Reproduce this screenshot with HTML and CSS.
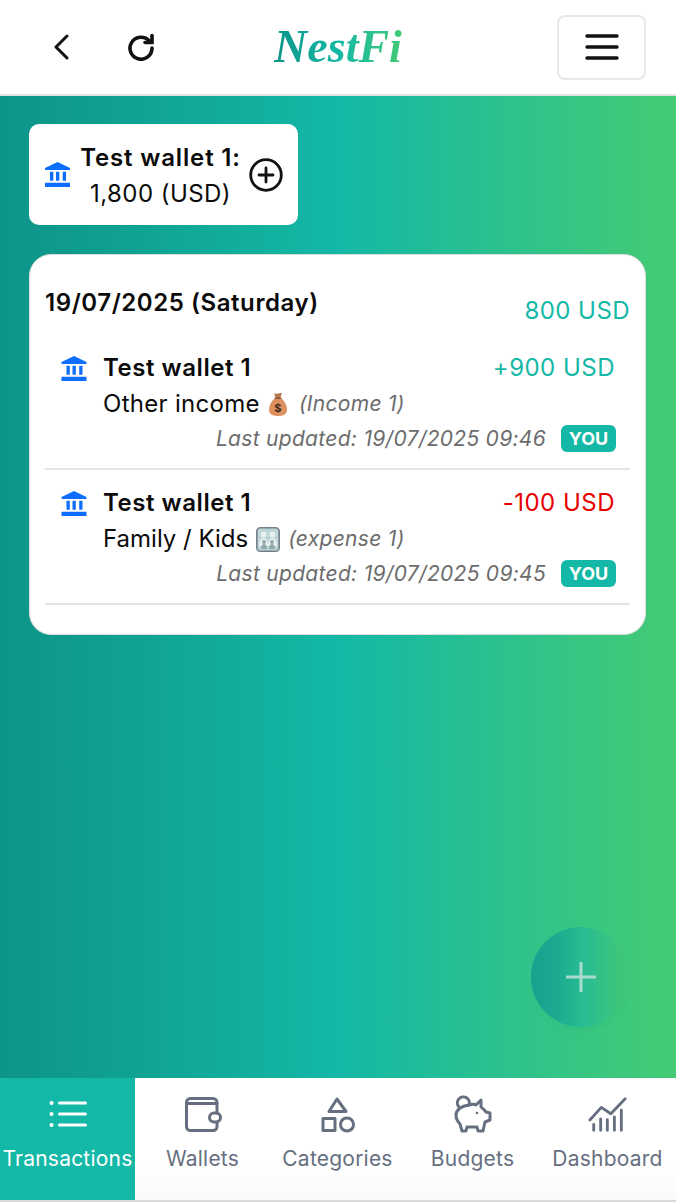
FILE: index.html
```html
<!DOCTYPE html>
<html lang="en">
<head>
<meta charset="utf-8">
<title>NestFi</title>
<link rel="stylesheet" href="styles.css">
</head>
<body>
<div class="app">
  <header class="topbar">
    <div class="top-left">
      <svg class="ic-back" viewBox="0 0 16 26"><path d="M14 2 3 13l11 11"/></svg>
      <svg class="ic-reload" viewBox="0 0 28 28"><path d="M22.3 8A11 11 0 1 0 25 15"/><path d="M25 2.5V9.5H18"/></svg>
    </div>
    <div class="logo">NestFi</div>
    <div class="top-right">
      <button class="menu-btn"><svg viewBox="0 0 34 28"><path d="M2 3h30M2 14h30M2 25h30"/></svg></button>
    </div>
  </header>

  <main class="content">
    <div class="wallet-chip">
      <svg class="bank bank-chip" viewBox="0 0 25 25"><path d="M12.5 0 25 6v2H0V6z"/><path d="M5 9.7h3.300v9H5zM11 9.700h3.300v9H11zM17.700 9.700H21v9h-3.300zM0 20.700h25V25H0z"/></svg>
      <div class="chip-text">
        <div class="chip-name">Test wallet 1:</div>
        <div class="chip-amount">1,800 (USD)</div>
      </div>
      <svg class="ic-plus-circle" viewBox="0 0 34 34"><circle cx="17" cy="17" r="15.300"/><path d="M17 10v14M10 17h14"/></svg>
    </div>

    <section class="card">
      <div class="day-head">
        <div class="day-date">19/07/2025 (Saturday)</div>
        <div class="day-total">800 USD</div>
      </div>

      <article class="tx">
        <svg class="bank bank-row" viewBox="0 0 25 25"><path d="M12.5 0 25 6v2H0V6z"/><path d="M5 9.7h3.300v9H5zM11 9.700h3.300v9H11zM17.700 9.700H21v9h-3.300zM0 20.700h25V25H0z"/></svg>
        <div class="tx-body">
          <div class="tx-line">
            <span class="tx-wallet">Test wallet 1</span>
            <span class="tx-amount income">+900 USD</span>
          </div>
          <div class="tx-cat"><span>Other income</span>
            <svg class="emoji bag" viewBox="0 0 18 23"><path class="bag-tie" d="M5 0c1 1 2 .8 4 .4s3-.2 4-.4l-1.600 5H6.500z"/><path class="bag-body" d="M6 5h6c3 2.500 6 7 6 11.500 0 4.500-3 6.500-9 6.500s-9-2-9-6.500C0 12 3 7.500 6 5z"/><path class="bag-band" d="M5.800 4.600h6.400v1.300H5.800z"/><text class="bag-sign" x="9" y="19">$</text></svg>
            <span class="tx-note">(Income 1)</span></div>
          <div class="tx-meta">
            <span class="tx-time">Last updated: 19/07/2025 09:46</span>
            <span class="badge">YOU</span>
          </div>
        </div>
      </article>

      <article class="tx">
        <svg class="bank bank-row" viewBox="0 0 25 25"><path d="M12.5 0 25 6v2H0V6z"/><path d="M5 9.7h3.300v9H5zM11 9.700h3.300v9H11zM17.700 9.700H21v9h-3.300zM0 20.700h25V25H0z"/></svg>
        <div class="tx-body">
          <div class="tx-line">
            <span class="tx-wallet">Test wallet 1</span>
            <span class="tx-amount expense">-100 USD</span>
          </div>
          <div class="tx-cat"><span class="tight">Family / Kids</span>
            <svg class="emoji family" viewBox="0 0 24 25"><rect class="fam-bg" x=".8" y=".8" width="22.400" height="23.400" rx="3.500"/><circle class="fam-p" cx="7.500" cy="7.500" r="3"/><circle class="fam-p" cx="16.500" cy="7.500" r="3"/><path class="fam-p" d="M3 19c0-5 2-8 4.500-8s4.500 3 4.500 8zM12 19c0-5 2-8 4.500-8s4.500 3 4.500 8z"/><circle class="fam-k" cx="8" cy="15" r="2"/><circle class="fam-k" cx="16" cy="15" r="2"/><path class="fam-k" d="M5 22c0-3 1.300-5 3-5s3 2 3 5zM13 22c0-3 1.300-5 3-5s3 2 3 5z"/></svg>
            <span class="tx-note">(expense 1)</span></div>
          <div class="tx-meta">
            <span class="tx-time">Last updated: 19/07/2025 09:45</span>
            <span class="badge">YOU</span>
          </div>
        </div>
      </article>
    </section>

    <button class="fab"><svg viewBox="0 0 30 30"><path d="M15 1v28M1 15h28"/></svg></button>
  </main>

  <nav class="tabbar">
    <div class="tab active">
      <svg viewBox="0 0 40 40"><path d="M11.500 8h26M11.500 19h26M11.500 30h26"/><path class="dot" d="M3.500 8h.1M3.500 19h.1M3.500 30h.1"/></svg>
      <span>Transactions</span>
    </div>
    <div class="tab">
      <svg viewBox="0 0 40 40"><path d="M34 18V7.500a4 4 0 0 0-4-4H7.500a4 4 0 0 0-4 4v24a4 4 0 0 0 4 4H30a4 4 0 0 0 4-4V27"/><path d="M3.500 8.500H34"/><rect x="26.500" y="18" width="11" height="9" rx="4.500"/></svg>
      <span>Wallets</span>
    </div>
    <div class="tab">
      <svg viewBox="0 0 40 40"><path d="M19 4 11 16.500h17z"/><rect x="5" y="23.500" width="12" height="12"/><circle cx="29" cy="29.500" r="6.500"/></svg>
      <span>Categories</span>
    </div>
    <div class="tab">
      <svg viewBox="0 0 40 40"><path d="M16 10c3-1 5-1 7 0l5-5v7c2 2 4 3 5 5l4 1v7l-5 2-2 9h-5l-1-4H14l-1 4H9l-2-7c-3-3-4-6-4-9 0-5 5-9 13-10z"/><path d="M6 12a6 6 0 1 1 10-2"/><circle class="eye" cx="24" cy="18" r="1.300"/></svg>
      <span>Budgets</span>
    </div>
    <div class="tab">
      <svg viewBox="0 0 42 40"><path d="M2 25.300 14 12l10 6.700L39 3"/><path d="M6 30v6M13.300 24v12M20.300 25v11M27.700 22v14M35 15v21"/></svg>
      <span>Dashboard</span>
    </div>
  </nav>
</div>
</body>
</html>
```

FILE: styles.css
```css
* { box-sizing: border-box; }
html, body { margin: 0; padding: 0; height: 100%; }
body { font-family: Inter, "Liberation Sans", sans-serif; color: #0b0b0b; background: #fff; }
.app { display: flex; flex-direction: column; height: 1202px; width: 100%; }

.topbar {
  flex: 0 0 96px;
  display: grid;
  grid-template-columns: 1fr auto 1fr;
  align-items: center;
  background: #fff;
  border-bottom: 2px solid #e3e3e3;
}
.top-left { display: flex; align-items: center; padding-left: 53px; gap: 58px; }
.ic-back { width: 16px; height: 26px; fill: none; stroke: #111; stroke-width: 3; stroke-linecap: round; stroke-linejoin: round; }
.ic-reload { width: 28px; height: 28px; fill: none; stroke: #111; stroke-width: 3.600; stroke-linecap: round; }
.logo {
  font-family: "Liberation Serif", serif;
  font-style: italic;
  font-weight: 700;
  font-size: 46px;
  line-height: 60px;
  background: linear-gradient(90deg, #0d9488, #14b8a6 50%, #42c976);
  -webkit-background-clip: text;
  background-clip: text;
  color: transparent;
}
.top-right { display: flex; justify-content: flex-end; padding-right: 30px; }
.menu-btn {
  width: 89px; height: 65px;
  display: flex; align-items: center; justify-content: center;
  background: #fff;
  border: 2px solid #e8e8e8;
  border-radius: 8px;
  padding: 0;
}
.menu-btn svg { width: 34px; height: 28px; fill: none; stroke: #111; stroke-width: 3.400; stroke-linecap: round; }

.content {
  flex: 1 1 auto;
  position: relative;
  padding: 28px 30px 0 29px;
  background: linear-gradient(90deg, #0d9488 0%, #14b8a6 50%, #45cb74 100%);
}
.wallet-chip {
  display: inline-flex;
  align-items: center;
  width: 269px; height: 101px;
  padding: 0 15px 0 16px;
  background: #fff;
  border-radius: 10px;
  vertical-align: top;
}
.bank { fill: #0d6efd; flex: none; }
.bank-chip { width: 25px; height: 25px; margin-right: 8px; }
.chip-text { flex: 1 1 auto; text-align: center; white-space: nowrap; padding-top: 2px; }
.chip-name { font-size: 24px; line-height: 36px; font-weight: 600; letter-spacing: .85px; }
.chip-amount { font-size: 24px; line-height: 36px; letter-spacing: .45px; }
.ic-plus-circle { width: 34px; height: 34px; flex: none; fill: none; stroke: #111; stroke-width: 2.800; stroke-linecap: round; margin-left: 6px; }

.card {
  margin-top: 29px;
  height: 381px;
  padding: 0 15px;
  background: #fff;
  border: 1px solid #dcdcdc;
  border-radius: 22px;
}
.day-head { display: flex; justify-content: space-between; align-items: flex-end; padding-top: 32px; padding-bottom: 8px; }
.day-date { font-size: 24px; line-height: 32px; font-weight: 600; padding-bottom: 8px; letter-spacing: .57px; }
.day-total { font-size: 24px; line-height: 32px; color: #14b8a6; letter-spacing: .45px; }

.tx { display: flex; padding: 15px 15px 14px 16px; border-bottom: 2px solid #e5e5e5; gap: 16px; }
.bank-row { width: 26px; height: 25px; margin-top: 6px; }
.tx-body { flex: 1 1 auto; min-width: 0; }
.tx-line { display: flex; justify-content: space-between; line-height: 36px; }
.tx-wallet { font-size: 24px; font-weight: 600; letter-spacing: .55px; }
.tx-amount { font-size: 24px; letter-spacing: .48px; }
.income { color: #14b8a6; }
.expense { color: #e60000; }
.tx-cat { font-size: 24px; line-height: 36px; display: flex; align-items: center; white-space: nowrap; letter-spacing: .3px; }
.tight { letter-spacing: 0; }
.tx-note { font-size: 21px; font-style: italic; color: #6c6c6c; letter-spacing: .3px; }
.emoji { flex: none; }
.bag { width: 18px; height: 23px; margin: 0 12px 0 9px; }
.bag-tie { fill: #b97a4e; }
.bag-body { fill: #dd9160; }
.bag-band { fill: #7a5236; }
.bag-sign { font-family: Inter, sans-serif; font-size: 11px; font-weight: 700; text-anchor: middle; fill: #3b2a1c; }
.family { width: 24px; height: 25px; margin: 0 8px 0 8px; }
.fam-bg { fill: #bcd5d6; stroke: #73808c; stroke-width: 1.600; }
.fam-p { fill: #e9f1f1; }
.fam-k { fill: #93a7ab; }

.tx-meta { display: flex; justify-content: flex-end; align-items: center; height: 32px; gap: 15px; margin-right: -1px; }
.tx-time { font-size: 21px; font-style: italic; color: #6c6c6c; white-space: nowrap; letter-spacing: .3px; }
.badge {
  display: block;
  width: 55px; height: 27px;
  border-radius: 6px;
  background: #14b8a6;
  color: #fff;
  font-size: 18px; line-height: 27px;
  font-weight: 700;
  text-align: center;
}

.fab {
  position: absolute;
  left: 531px; top: 831px;
  width: 100px; height: 100px;
  border: 0; padding: 0;
  border-radius: 50%;
  display: flex; align-items: center; justify-content: center;
  background: linear-gradient(90deg, #17a08f 0%, #1cab90 28%, #27bb93 50%, #3ec67b 88%);
  box-shadow: 0 8px 10px -8px rgba(20, 150, 110, .22);
}
.fab svg { width: 30px; height: 30px; fill: none; stroke: #a9dccd; stroke-width: 3; stroke-linecap: round; }

.tabbar {
  flex: 0 0 124px;
  display: grid;
  grid-template-columns: repeat(5, 135px);
  background: linear-gradient(180deg, #fff 70%, #fafafa);
  border-bottom: 2px solid #d9d9d9;
}
.tab {
  display: flex; flex-direction: column; align-items: center;
  padding-top: 17px;
  color: #666f80;
  font-size: 21px;
  line-height: 30px;
  letter-spacing: .22px;
  white-space: nowrap;
}
.tab svg { width: 40px; height: 40px; margin-bottom: 9px; fill: none; stroke: currentColor; stroke-width: 3; stroke-linecap: round; stroke-linejoin: round; flex: none; }
.tab .dot { stroke-width: 4; }
.tab .eye { fill: currentColor; stroke: none; }
.tab.active { background: #14b8a6; color: #fff; }
```
